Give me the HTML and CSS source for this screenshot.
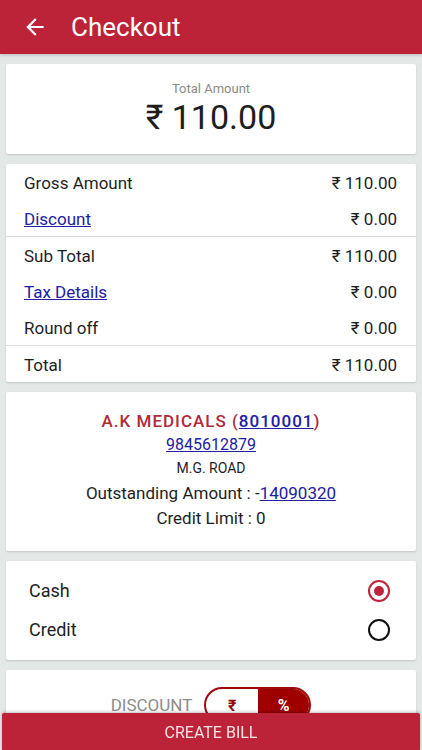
FILE: index.html
```html
<!DOCTYPE html>
<html>
<head>
  <title>Checkout</title>
  <link rel="stylesheet" href="styles.css">
</head>
<body>

  <div class="topbar">
    <svg class="back" viewBox="0 0 24 24" width="26" height="26">
      <path d="M20 11H7.83l5.59-5.59L12 4l-8 8 8 8 1.41-1.41L7.83 13H20v-2z" fill="#fff"/>
    </svg>
    <h1>Checkout</h1>
  </div>

  <div class="page">
    <div class="card total-card">
      <p class="total-label">Total Amount</p>
      <p class="total-value">₹ 110.00</p>
    </div>

    <div class="card summary">
      <div class="row"><span>Gross Amount</span><span>₹ 110.00</span></div>
      <div class="row line"><a href="#" class="link">Discount</a><span>₹ 0.00</span></div>
      <div class="row"><span>Sub Total</span><span>₹ 110.00</span></div>
      <div class="row"><a href="#" class="link">Tax Details</a><span>₹ 0.00</span></div>
      <div class="row line"><span>Round off</span><span>₹ 0.00</span></div>
      <div class="row"><span>Total</span><span>₹ 110.00</span></div>
    </div>

    <div class="card customer">
      <p class="cust-name">A.K MEDICALS (<a href="#" class="link">8010001</a>)</p>
      <p class="cust-phone"><a href="#" class="link">9845612879</a></p>
      <p class="cust-addr">M.G. ROAD</p>
      <p class="cust-out">Outstanding Amount : -<a href="#" class="link">14090320</a></p>
      <p class="cust-limit">Credit Limit : 0</p>
    </div>

    <div class="card payment">
      <label class="pay-row">Cash <span class="radio checked"></span></label>
      <label class="pay-row">Credit <span class="radio"></span></label>
    </div>

    <div class="card discount">
      <span class="disc-label">DISCOUNT</span>
      <div class="toggle">
        <span class="tog rupee">₹</span>
        <span class="tog pct active">%</span>
      </div>
    </div>
  </div>

  <button class="create-btn">CREATE BILL</button>

</body>
</html>
```

FILE: styles.css
```css
body {
  margin: 0;
  font-family: Roboto, "Liberation Sans", sans-serif;
  background-color: #e4e9e7;
  color: #1e1e1e;
  overflow: hidden;
}

p {
  margin: 0;
}

.link {
  color: #2020a6;
}

/* top bar */
.topbar {
  height: 54px;
  background-color: #bc2238;
  display: flex;
  align-items: center;
  padding-left: 22px;
  box-shadow: 0 1px 3px rgba(0, 0, 0, 0.2);
}

.topbar .back {
  display: block;
}

.topbar h1 {
  margin: 0 0 0 23px;
  color: #fff;
  font-size: 26px;
  font-weight: 400;
}

.page {
  padding: 10px 6px;
  display: flex;
  flex-direction: column;
  gap: 10px;
}

.card {
  background-color: #fff;
  border-radius: 2px;
  box-shadow: 0 1px 2px rgba(0, 0, 0, 0.16);
}

/* total amount */
.total-card {
  padding: 17px 0;
  text-align: center;
}

.total-label {
  font-size: 13px;
  line-height: 16px;
  color: #8a8a8a;
}

.total-value {
  font-size: 34px;
  line-height: 40px;
  color: #1e1e1e;
}

/* summary rows */
.row {
  height: 36px;
  display: flex;
  align-items: center;
  justify-content: space-between;
  padding: 2px 19px 0 18px;
  box-sizing: border-box;
  font-size: 17px;
}

.row.line {
  height: 37px;
  border-bottom: 1px solid #dcdcdc;
}

/* customer */
.customer {
  padding: 17px 0 20px;
  text-align: center;
}

.cust-name {
  font-size: 17px;
  line-height: 24px;
  font-weight: 500;
  letter-spacing: 1px;
  color: #b02a3a;
}

.cust-phone {
  font-size: 16px;
  line-height: 23px;
}

.cust-addr {
  font-size: 14px;
  line-height: 24px;
}

.cust-out {
  font-size: 17px;
  line-height: 26px;
}

.cust-limit {
  font-size: 17px;
  line-height: 25px;
}

/* payment */
.payment {
  padding: 10px 26px 11px 23px;
}

.pay-row {
  height: 39px;
  display: flex;
  align-items: center;
  justify-content: space-between;
  font-size: 18px;
}

.radio {
  width: 18px;
  height: 18px;
  border: 2px solid #111;
  border-radius: 50%;
  box-sizing: content-box;
  display: flex;
  align-items: center;
  justify-content: center;
}

.radio.checked {
  border-color: #c0243a;
}

.radio.checked::after {
  content: "";
  width: 10px;
  height: 10px;
  border-radius: 50%;
  background-color: #c0243a;
}

/* discount */
.discount {
  height: 120px;
  padding-top: 17px;
  display: flex;
  justify-content: center;
  align-items: flex-start;
  gap: 12px;
  box-sizing: border-box;
}

.disc-label {
  font-size: 17px;
  line-height: 36px;
  color: #8c8c8c;
}

.toggle {
  display: flex;
  width: 107px;
  height: 36px;
  border: 2px solid #9e0b0b;
  border-radius: 18px;
  overflow: hidden;
  box-sizing: border-box;
}

.tog {
  flex: 1;
  display: flex;
  align-items: center;
  justify-content: center;
  font-size: 16px;
  font-weight: bold;
  color: #8e0a0a;
}

.tog.active {
  background-color: #9e0000;
  color: #fff;
}

/* bottom button */
.create-btn {
  position: fixed;
  left: 2px;
  right: 2px;
  bottom: 0;
  height: 37px;
  padding-top: 3px;
  border: none;
  border-radius: 2px 2px 0 0;
  background-color: #bc2238;
  color: #f6e4e6;
  font-family: Roboto, "Liberation Sans", sans-serif;
  font-size: 16px;
  box-shadow: 0 -1px 3px rgba(0, 0, 0, 0.25);
}
```
